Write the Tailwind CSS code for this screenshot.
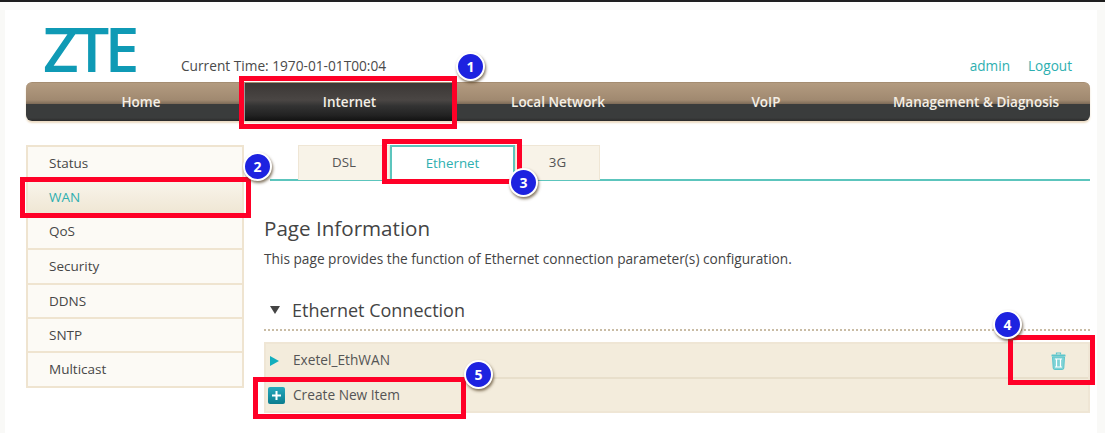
<!DOCTYPE html>
<html lang="en">
  <head>
    <meta charset="UTF-8" />
    <title>ZTE Router - Ethernet</title>
    <script src="https://cdn.jsdelivr.net/npm/@tailwindcss/browser@4"></script>
  </head>
  <body class="bg-[#f9f9f7] font-['Open_Sans',sans-serif] text-[13px] text-[#444] overflow-hidden">
    <div class="relative w-[1105px] h-[433px] overflow-hidden border-t-2 border-[#1c1c1c] pt-2 pl-[5px] pr-2">
      <div class="bg-white h-[423px] pl-[21px] pr-[7px]">
        <!-- header -->
        <header class="flex items-end h-[72px] pb-[8px]">
          <div class="w-[155px] pl-[17px] pb-[1px]">
            <span class="block font-semibold text-[62px] leading-[50px] h-[50px] tracking-[-4.5px] text-[#0f9ab5]">ZTE</span>
          </div>
          <span class="text-[13.7px] leading-4 text-[#4a4a4a]">Current Time: 1970-01-01T00:04</span>
          <div class="ml-auto flex gap-[18px] pr-[18px] text-[13.6px] leading-4 text-[#2eafb0]">
            <a href="#">admin</a>
            <a href="#">Logout</a>
          </div>
        </header>

        <!-- main nav -->
        <nav class="flex h-[39px] rounded-[6px] border-t border-[#a58d72] bg-[linear-gradient(to_bottom,#b39b80_0%,#a08970_45%,#7d6b58_55%,#3a3c3c_56%,#3a3c3c_92%,#2a2a2a_100%)] shadow-[0_2px_2px_#ecdcc4] font-semibold text-[13.5px] text-[#f4efe6]">
          <a href="#" class="w-[218px] pl-3 flex items-center justify-center">Home</a>
          <a href="#" class="w-[208px] pl-[2px] flex items-center justify-center border-l border-[#999] bg-[linear-gradient(to_bottom,#3b3735_0%,#4a4644_45%,#333_60%,#222_85%,#111_100%)]">Internet</a>
          <a href="#" class="w-[212px] flex items-center justify-center">Local Network</a>
          <a href="#" class="w-[204px] flex items-center justify-center">VoIP</a>
          <a href="#" class="flex-1 pr-[6px] flex items-center justify-center">Management &amp; Diagnosis</a>
        </nav>

        <div class="flex items-start mt-[24px]">
          <!-- sidebar -->
          <aside class="w-[218px] shrink-0 border-2 border-[#efe4d0] bg-[#fcfaf5] font-medium text-[13.5px] text-[#474747]">
            <div class="h-[33px] flex items-center pl-[21px]">Status</div>
            <div class="h-[34px] flex items-center pl-[21px] pt-[1px] font-normal text-[#2eafb0] bg-[linear-gradient(to_bottom,#f9f5ec,#efe6d3)]">WAN</div>
            <div class="h-[34px] flex items-center pl-[21px] pt-[1px]">QoS</div>
            <div class="h-[35px] flex items-center pl-[21px] border-t-2 border-[#efe4d0]">Security</div>
            <div class="h-[34px] flex items-center pl-[21px] border-t-2 border-[#efe4d0]">DDNS</div>
            <div class="h-[34px] flex items-center pl-[21px] border-t-2 border-[#efe4d0]">SNTP</div>
            <div class="h-[35px] flex items-center pl-[21px] border-t-2 border-[#efe4d0]">Multicast</div>
          </aside>

          <!-- content -->
          <main class="flex-1 pl-[20px]">
            <div class="flex h-[36px] pl-[28px] ml-[6px] border-b-2 border-[#5cc5bd] text-[13.3px] font-medium">
              <a href="#" class="w-[92px] h-[35px] flex items-center justify-center bg-[#f8f3e8] border border-[#efe6d5] border-b-0 text-[#555]">DSL</a>
              <a href="#" class="w-[125px] h-[36px] flex items-center justify-center bg-white border-2 border-[#5cc5bd] border-b-0 text-[#2eafb0]">Ethernet</a>
              <a href="#" class="w-[85px] h-[35px] flex items-center justify-center bg-[#f8f3e8] border border-[#efe6d5] border-b-0 text-[#555]">3G</a>
            </div>

            <h1 class="mt-[33px] text-[20.6px] leading-7 text-[#444]">Page Information</h1>
            <p class="mt-[8px] text-[13.7px] leading-[18px] text-[#444]">This page provides the function of Ethernet connection parameter(s) configuration.</p>

            <div class="mt-[27px] flex items-center h-[32px] pl-[6px] pb-[2px]">
              <span class="w-0 h-0 border-x-[5px] border-x-transparent border-t-[8px] border-t-[#444]"></span>
              <h2 class="ml-[12px] text-[18px] leading-6 text-[#444]">Ethernet Connection</h2>
            </div>
            <div class="mt-[2px] border-t-2 border-dotted border-[#c9bca5]"></div>

            <div class="mt-[11px] border-2 border-[#efe6d5] bg-[#f3ecdc] text-[13.7px] text-[#555]">
              <div class="h-[35px] flex items-center pl-[4px] pr-[22px] border-b-2 border-[#e8dfcb]">
                <span class="w-0 h-0 border-y-[5px] border-y-transparent border-l-[9px] border-l-[#12aebd]"></span>
                <span class="ml-[14px]">Exetel_EthWAN</span>
                <svg class="ml-auto" width="15" height="18" viewBox="0 0 15 18" fill="none">
                  <path d="M5.5 2.5 V1 H9.5 V2.5" stroke="#5cc5cc" stroke-width="1.2" />
                  <rect x="0.5" y="2.5" width="14" height="2" rx="0.5" fill="#5cc5cc" />
                  <path d="M1.5 5 H13.5 L12.8 16 Q12.7 17.5 11.3 17.5 H3.7 Q2.3 17.5 2.2 16 Z" fill="#7fd3d6" stroke="#5cc5cc" />
                  <path d="M5.5 7 V15 M9.5 7 V15 M4 7 H11 M4 15 H11" stroke="#fff" stroke-width="1.2" />
                </svg>
              </div>
              <div class="h-[32px] flex items-center pl-[2px] pt-[1px]">
                <span class="w-[17px] h-[17px] rounded-[2px] bg-[linear-gradient(to_bottom,#27a9bd,#0b7d8f)] flex items-center justify-center">
                  <svg width="9" height="9" viewBox="0 0 9 9"><path d="M4.5 0 V9 M0 4.5 H9" stroke="#fff" stroke-width="2" /></svg>
                </span>
                <span class="ml-[8px]">Create New Item</span>
              </div>
            </div>
          </main>
        </div>
      </div>

      <!-- annotations on top of the screenshot -->
      <div class="absolute left-[239px] top-[74px] w-[218px] h-[53px] border-[5px] border-[#ff0027]"></div>
      <div class="absolute left-[20px] top-[175px] w-[231px] h-[41px] border-[5px] border-[#ff0027]"></div>
      <div class="absolute left-[382px] top-[137px] w-[140px] h-[45px] border-[5px] border-[#ff0027]"></div>
      <div class="absolute left-[1008px] top-[333px] w-[87px] h-[50px] border-[5px] border-[#ff0027]"></div>
      <div class="absolute left-[253px] top-[375px] w-[213px] h-[42px] border-[5px] border-[#ff0027]"></div>

      <span class="absolute left-[456px] top-[50px] w-[29px] h-[29px] rounded-full bg-[#1d22e0] border-2 border-white shadow-[1px_2px_3px_rgba(80,60,30,0.7)] flex items-center justify-center text-white font-bold text-[14px]">1</span>
      <span class="absolute left-[243px] top-[150px] w-[29px] h-[29px] rounded-full bg-[#1d22e0] border-2 border-white shadow-[1px_2px_3px_rgba(80,60,30,0.7)] flex items-center justify-center text-white font-bold text-[14px]">2</span>
      <span class="absolute left-[509px] top-[166px] w-[29px] h-[29px] rounded-full bg-[#1d22e0] border-2 border-white shadow-[1px_2px_3px_rgba(80,60,30,0.7)] flex items-center justify-center text-white font-bold text-[14px]">3</span>
      <span class="absolute left-[993px] top-[308px] w-[29px] h-[29px] rounded-full bg-[#1d22e0] border-2 border-white shadow-[1px_2px_3px_rgba(80,60,30,0.7)] flex items-center justify-center text-white font-bold text-[14px]">4</span>
      <span class="absolute left-[464px] top-[358px] w-[29px] h-[29px] rounded-full bg-[#1d22e0] border-2 border-white shadow-[1px_2px_3px_rgba(80,60,30,0.7)] flex items-center justify-center text-white font-bold text-[14px]">5</span>
    </div>
  </body>
</html>
